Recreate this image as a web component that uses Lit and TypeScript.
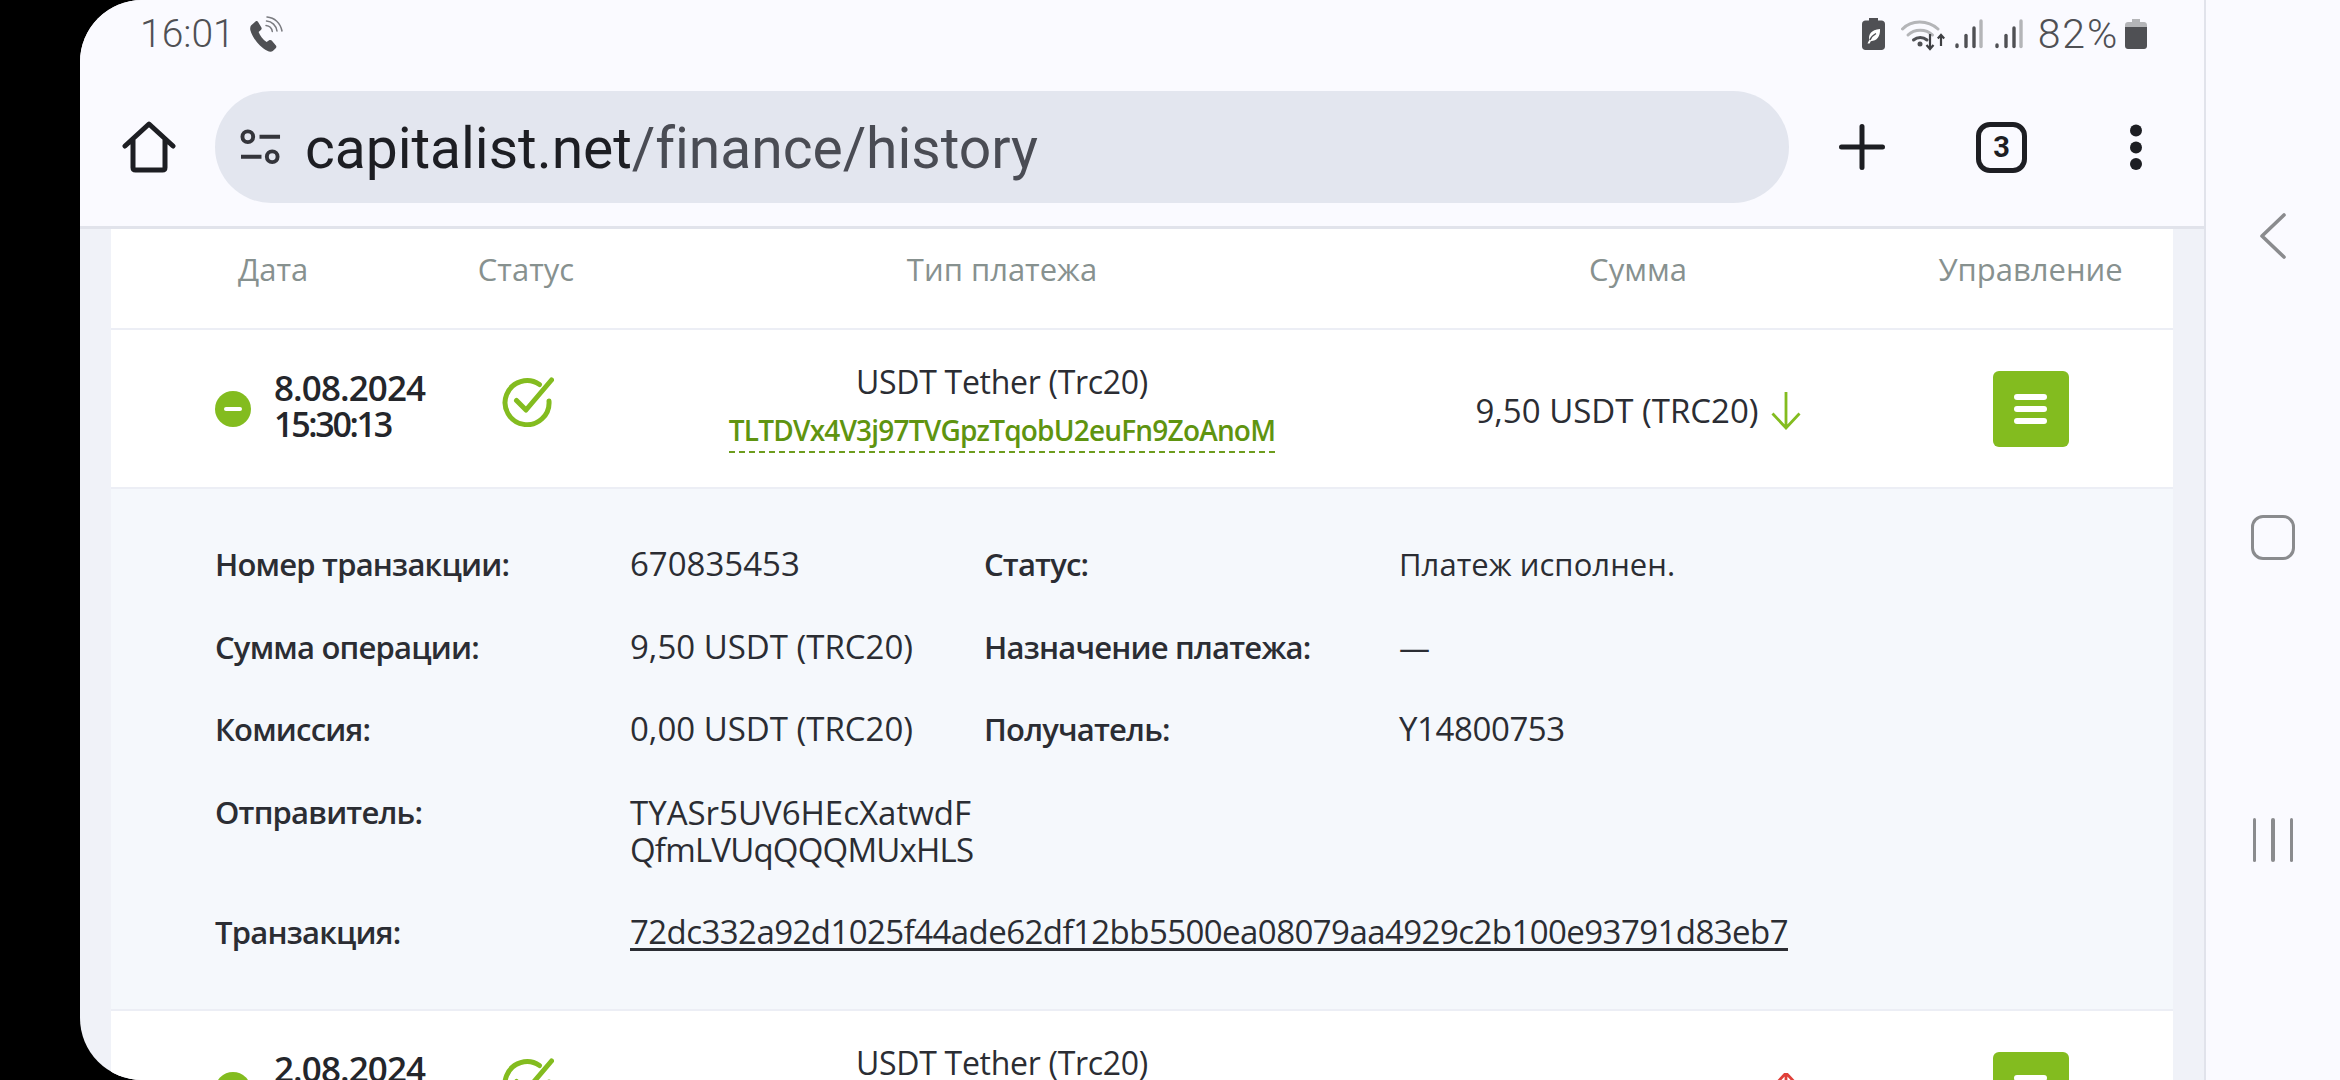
import { LitElement, html, css } from "lit";
import { customElement } from "lit/decorators.js";

const GREEN = "#83bc1f";

const phoneIcon = html`<svg class="ic" width="36" height="36" viewBox="0 0 36 36"><path fill="#4f5054" d="M3 9.500 7.500 5.500c.9-.8 2-.6 2.600.4l3.300 5.600c.5.900.3 1.800-.5 2.500l-2.300 1.900c1.400 3.800 4.300 7.600 8 10l2.500-1.600c.9-.6 1.900-.5 2.600.3l4.200 5c.7.8.6 1.900-.2 2.600L24.800 35c-1.400 1-3.400.8-5.600-.2C11.800 31.200 4.800 22.500 2.300 13.900c-.3-1.700 0-3.400.7-4.400Z"/><g fill="none" stroke="#7a7b80" stroke-width="1.500" stroke-linecap="round"><path d="M18 9.500c3.200.3 5.800 2.700 6.300 6"/><path d="M18.500 5c5.500.4 9.700 4.500 10.500 10"/><path d="M19 1c7.500.5 13.500 6 15 14"/></g></svg>`;

const leafBattery = html`<svg class="ic" width="23" height="32" viewBox="0 0 23 32"><path fill="#4f5054" d="M7 0h9v2.500h3.500c2 0 3.500 1.500 3.500 3.500v22.500c0 2-1.500 3.500-3.500 3.500h-16C1.500 32 0 30.500 0 28.500V6c0-2 1.500-3.500 3.500-3.500H7Z"/><path fill="#fff" d="M5.500 25.500c.5-1.400 1.100-2.500 1.900-3.600C6 17 9 11.500 18 11c.4 7.500-3 11.800-9.200 12.200-.5.800-.9 1.500-1.200 2.300Z"/><path fill="none" stroke="#4f5054" stroke-width="1.400" d="M8 22c1-2.600 3-4.800 6-6.500"/></svg>`;

const wifiIcon = html`<svg class="ic" width="46" height="34" viewBox="0 0 46 34"><g fill="none" stroke-linecap="round"><path d="M1.500 12C10 2.500 27 2.500 37 12" stroke="#b4b5b8" stroke-width="3"/><path d="M7 18c6.500-6.500 18-6.500 24.500 0" stroke="#b4b5b8" stroke-width="3"/><path d="M12.500 23c4-3.500 9.500-3.500 13.500 0" stroke="#4f5054" stroke-width="3"/></g><circle cx="19" cy="27" r="2.500" fill="#4f5054"/><g fill="none" stroke="#3f4044" stroke-width="2.200"><path d="M29 17v15M25.500 28l3.500 4 3.500-4"/><path d="M40 29V18M36.800 21.500 40 18l3.200 3.500"/></g></svg>`;

const signalIcon = html`<svg class="ic" width="28" height="30" viewBox="0 0 28 30"><g stroke-width="3.400" stroke-linecap="round"><path d="M2 26v1.500" stroke="#4f5054"/><path d="M11 16.500v11" stroke="#4f5054"/><path d="M19 9v18.500" stroke="#4f5054"/><path d="M26 2v25.500" stroke="#b4b5b8"/></g></svg>`;

const batteryIcon = html`<svg class="ic" width="22" height="30" viewBox="0 0 22 30"><path fill="#b4b5b8" d="M7 0h8v3h4c1.700 0 3 1.300 3 3v6H0V6c0-1.700 1.300-3 3-3h4Z"/><path fill="#4f5054" d="M0 8h22v19c0 1.700-1.300 3-3 3H3c-1.700 0-3-1.300-3-3Z"/></svg>`;

const homeIcon = html`<svg class="ic" width="54" height="52" viewBox="0 0 54 52"><path fill="none" stroke="#1d1e23" stroke-width="5" stroke-linejoin="round" stroke-linecap="round" d="M3 25 27 3l24 22M11 19v27.500c0 1.500 1 2.500 2.500 2.500h27c1.500 0 2.500-1 2.500-2.500V19"/></svg>`;

const tuneIcon = html`<svg class="ic" width="42" height="36" viewBox="0 0 42 36"><g fill="none" stroke="#34353b" stroke-width="4"><circle cx="8" cy="7.500" r="5.500"/><circle cx="33" cy="28" r="5.500"/><path d="M20 7.500h21M1 28h21"/></g></svg>`;

const plusIcon = html`<svg class="ic" width="46" height="46" viewBox="0 0 46 46"><path stroke="#1d1e23" stroke-width="5" stroke-linecap="round" d="M23 2.500v41M2.500 23h41"/></svg>`;

const menuDots = html`<svg class="ic" width="14" height="46" viewBox="0 0 14 46"><circle cx="7" cy="6.500" r="6" fill="#1d1e23"/><circle cx="7" cy="23.500" r="6" fill="#1d1e23"/><circle cx="7" cy="40" r="6" fill="#1d1e23"/></svg>`;

const checkIcon = html`<svg class="ic" width="52" height="50" viewBox="0 0 52 50"><path fill="none" stroke="${GREEN}" stroke-width="5" stroke-linecap="round" d="M37.500 7.500A22 22 0 1 0 47 24"/><path fill="none" stroke="${GREEN}" stroke-width="5" stroke-linecap="round" stroke-linejoin="round" d="M14.500 23.500 24 33 49.500 3"/></svg>`;

const arrowDown = html`<svg class="ic" width="30" height="38" viewBox="0 0 30 38"><path fill="none" stroke="${GREEN}" stroke-width="2.800" d="M15 0v36M1.500 21.500 15 36 28.500 21.500"/></svg>`;
const arrowUp = html`<svg class="ic" width="30" height="38" viewBox="0 0 30 38"><path fill="none" stroke="#e0403a" stroke-width="2.800" d="M15 38V0M1.500 14.500 15 0 28.500 14.500"/></svg>`;

const backIcon = html`<svg class="ic" width="26" height="46" viewBox="0 0 26 46"><path fill="none" stroke="#8a8b8e" stroke-width="3.600" stroke-linecap="round" stroke-linejoin="round" d="M24 2 2 23l22 21"/></svg>`;

interface Row {
  date: string;
  time: string;
  open: boolean;
  wallet: string;
  amount: string;
  up: boolean;
}

const rows: Row[] = [
  { date: "8.08.2024", time: "15:30:13", open: true, wallet: "TLTDVx4V3j97TVGpzTqobU2euFn9ZoAnoM", amount: "9,50 USDT (TRC20)", up: false },
  { date: "2.08.2024", time: "", open: false, wallet: "", amount: "9,50 USDT (TRC20)", up: true },
];

@customElement("app-root")
export class AppRoot extends LitElement {
  static styles = css`
    :host {
      display: block;
      width: 2340px;
      height: 1080px;
      overflow: hidden;
      background: #000;
      font-family: "Open Sans", Roboto, "Liberation Sans", sans-serif;
      color: #2b2d33;
    }
    * { box-sizing: border-box; }
    .ic { display: block; flex: none; }
    .screen { display: flex; height: 1080px; padding-left: 80px; }
    .panel {
      width: 2124px;
      height: 1080px;
      flex: none;
      display: flex;
      flex-direction: column;
      background: #f0f2f8;
      border-radius: 62px 0 0 62px;
      overflow: hidden;
    }
    .chrome { background: #fafaff; border-bottom: 3px solid #e1e3eb; height: 229px; flex: none; }
    .status {
      height: 68px;
      display: flex;
      align-items: center;
      padding: 0 57px 0 60px;
      font-family: Roboto, sans-serif;
      font-weight: 300;
      color: #4f5054;
    }
    .time { font-size: 39px; line-height: 68px; width: 108px; }
    .status-right { margin-left: auto; display: flex; align-items: center; }
    .s-leaf { margin-right: 16px; }
    .s-wifi { margin-right: 8px; }
    .s-sig { margin-right: 12px; }
    .s-sig2 { margin-right: 15px; }
    .pct { font-size: 41px; line-height: 40px; margin-right: 6px; letter-spacing: 1.800px; }
    .toolbar { display: flex; align-items: center; height: 158px; padding-left: 42px; }
    .home { margin-right: 39px; }
    .pill {
      width: 1574px;
      height: 112px;
      border-radius: 56px;
      background: #e3e6ef;
      display: flex;
      align-items: center;
      padding-left: 25px;
      flex: none;
      margin-right: 50px;
    }
    .pill .ic { width: 41px; }
    .url {
      font-family: Roboto, sans-serif;
      font-size: 57px;
      line-height: 112px;
      margin: 3px 0 0 24px;
      color: #4a4c54;
      letter-spacing: -0.050px;
      white-space: nowrap;
    }
    .url b { font-weight: 400; color: #1d1e23; }
    .tab {
      width: 51px;
      height: 51px;
      border: 5px solid #1d1e23;
      border-radius: 14px;
      margin: 0 102px 0 91px;
      display: flex;
      align-items: center;
      justify-content: center;
      font-family: Roboto, sans-serif;
      font-weight: 700;
      font-size: 29px;
      color: #1d1e23;
      flex: none;
    }
    .table { margin: 0 31px 0 31px; background: #fff; flex: 1; min-height: 0; overflow: hidden; }
    .grid {
      display: grid;
      grid-template-columns: 339px 152px 800px 472px 299px;
      align-items: center;
    }
    .head {
      height: 101px;
      border-bottom: 2px solid #eceef5;
      color: #87918f;
      font-size: 31px;
      text-align: center;
      padding-bottom: 20px;
    }
    .head .first { text-align: left; padding-left: 127px; }
    .head .last { padding-left: 14px; }
    .row { height: 157px; }
    .datecell { display: flex; align-items: center; padding-left: 104px; }
    .toggle {
      width: 36px;
      height: 36px;
      border-radius: 50%;
      background: #83bc1f;
      margin-right: 23px;
      flex: none;
      display: flex;
      align-items: center;
      justify-content: center;
      position: relative;
    }
    .toggle i { display: block; width: 18px; height: 4px; border-radius: 2px; background: #fff; }
    .toggle.plus::after { content: ""; position: absolute; left: 16px; top: 9px; width: 4px; height: 18px; border-radius: 2px; background: #fff; }
    .date { font-size: 35px; line-height: 36px; font-weight: 600; letter-spacing: -0.900px; color: #24262b; padding-bottom: 5px; white-space: nowrap; }
    .date span { display: block; font-size: 34px; letter-spacing: -2.300px; min-height: 36px; }
    .statuscell { display: flex; justify-content: center; padding: 0 0 14px 3px; }
    .typecell { text-align: center; }
    .type { font-size: 32px; line-height: 36px; letter-spacing: -0.300px; margin-top: -1px; }
    .wallet {
      display: inline-block;
      margin-top: 12px;
      font-size: 28px;
      line-height: 36px;
      font-weight: 600;
      color: #5f9410;
      letter-spacing: -0.800px;
      border-bottom: 2px dashed #6d9c1d;
      padding-bottom: 3px;
    }
    .ghost { visibility: hidden; }
    .amountcell { display: flex; justify-content: center; align-items: center; padding-top: 5px; font-size: 33px; line-height: 36px; white-space: nowrap; }
    .amountcell svg { margin-left: 12px; }
    .actioncell { display: flex; justify-content: center; padding-left: 14px; }
    .menu {
      width: 76px;
      height: 76px;
      border-radius: 6px;
      background: #83bc1f;
      display: flex;
      flex-direction: column;
      align-items: center;
      justify-content: center;
      gap: 6px;
    }
    .menu i { display: block; width: 33px; height: 6px; border-radius: 3px; background: #fff; }
    .details {
      background: #f5f8fc;
      border-top: 2px solid #eceef5;
      border-bottom: 2px solid #eceef5;
      height: 524px;
      padding: 57px 0 0 104px;
      display: grid;
      grid-template-columns: 415px 354px 415px 1fr;
      grid-auto-rows: min-content;
      row-gap: 46.500px;
      font-size: 31px;
      line-height: 36px;
    }
    .details b { font-weight: 600; letter-spacing: -0.800px; color: #2b2d33; }
    .details span { white-space: nowrap; }
    .details .num { font-size: 33px; }
    .details .tight { letter-spacing: -0.400px; }
    .details a { color: inherit; text-decoration: underline; font-size: 33px; grid-column: 2 / 5; letter-spacing: -0.560px; text-underline-offset: 4px; }
    .wide { letter-spacing: 0.050px; }
    .full { grid-column: 2 / 5; line-height: 37px; }
    .details .full i { font-style: normal; letter-spacing: -0.800px; }
    .nav {
      flex: 1;
      background: #fafaff;
      border-left: 2px solid #e1e3eb;
      display: flex;
      flex-direction: column;
      align-items: center;
      padding-top: 213px;
    }
    .nav-square { width: 44px; height: 45px; border: 3.600px solid #8a8b8e; border-radius: 12px; margin-top: 256px; }
    .nav-bars { display: flex; gap: 15px; margin-top: 258px; }
    .nav-bars i { display: block; width: 3.600px; height: 44px; background: #8a8b8e; border-radius: 2px; }
  `;

  private renderRow(r: Row) {
    return html`<div class="grid row">
      <div class="datecell">
        <div class="toggle ${r.open ? "" : "plus"}"><i></i></div>
        <div class="date">${r.date}<span>${r.time}</span></div>
      </div>
      <div class="statuscell">${checkIcon}</div>
      <div class="typecell">
        <div class="type">USDT Tether (Trc20)</div>
        ${r.wallet ? html`<div class="wallet">${r.wallet}</div>` : html`<div class="wallet ghost">&nbsp;</div>`}
      </div>
      <div class="amountcell">${r.amount}${r.up ? arrowUp : arrowDown}</div>
      <div class="actioncell"><div class="menu"><i></i><i></i><i></i></div></div>
    </div>`;
  }

  render() {
    return html`<div class="screen">
      <div class="panel">
        <div class="chrome">
          <div class="status">
            <div class="time">16:01</div>
            ${phoneIcon}
            <div class="status-right">
              <div class="s-leaf">${leafBattery}</div>
              <div class="s-wifi">${wifiIcon}</div>
              <div class="s-sig">${signalIcon}</div>
              <div class="s-sig2">${signalIcon}</div>
              <div class="pct">82%</div>
              ${batteryIcon}
            </div>
          </div>
          <div class="toolbar">
            <div class="home">${homeIcon}</div>
            <div class="pill">
              ${tuneIcon}
              <div class="url"><b>capitalist.net</b>/finance/history</div>
            </div>
            ${plusIcon}
            <div class="tab">3</div>
            ${menuDots}
          </div>
        </div>
        <div class="table">
          <div class="grid head">
            <div class="first">Дата</div>
            <div>Статус</div>
            <div>Тип платежа</div>
            <div>Сумма</div>
            <div class="last">Управление</div>
          </div>
          ${this.renderRow(rows[0])}
          <div class="details">
            <b>Номер транзакции:</b><span class="num">670835453</span>
            <b>Статус:</b><span class="wide">Платеж исполнен.</span>
            <b>Сумма операции:</b><span class="num">9,50 USDT (TRC20)</span>
            <b>Назначение платежа:</b><span>—</span>
            <b>Комиссия:</b><span class="num">0,00 USDT (TRC20)</span>
            <b>Получатель:</b><span class="num tight">Y14800753</span>
            <b>Отправитель:</b><span class="num full">TYASr5UV6HEcXatwdF<br /><i>QfmLVUqQQQMUxHLS</i></span>
            <b>Транзакция:</b><a>72dc332a92d1025f44ade62df12bb5500ea08079aa4929c2b100e93791d83eb7</a>
          </div>
          ${this.renderRow(rows[1])}
        </div>
      </div>
      <div class="nav">
        ${backIcon}
        <div class="nav-square"></div>
        <div class="nav-bars"><i></i><i></i><i></i></div>
      </div>
    </div>`;
  }
}
